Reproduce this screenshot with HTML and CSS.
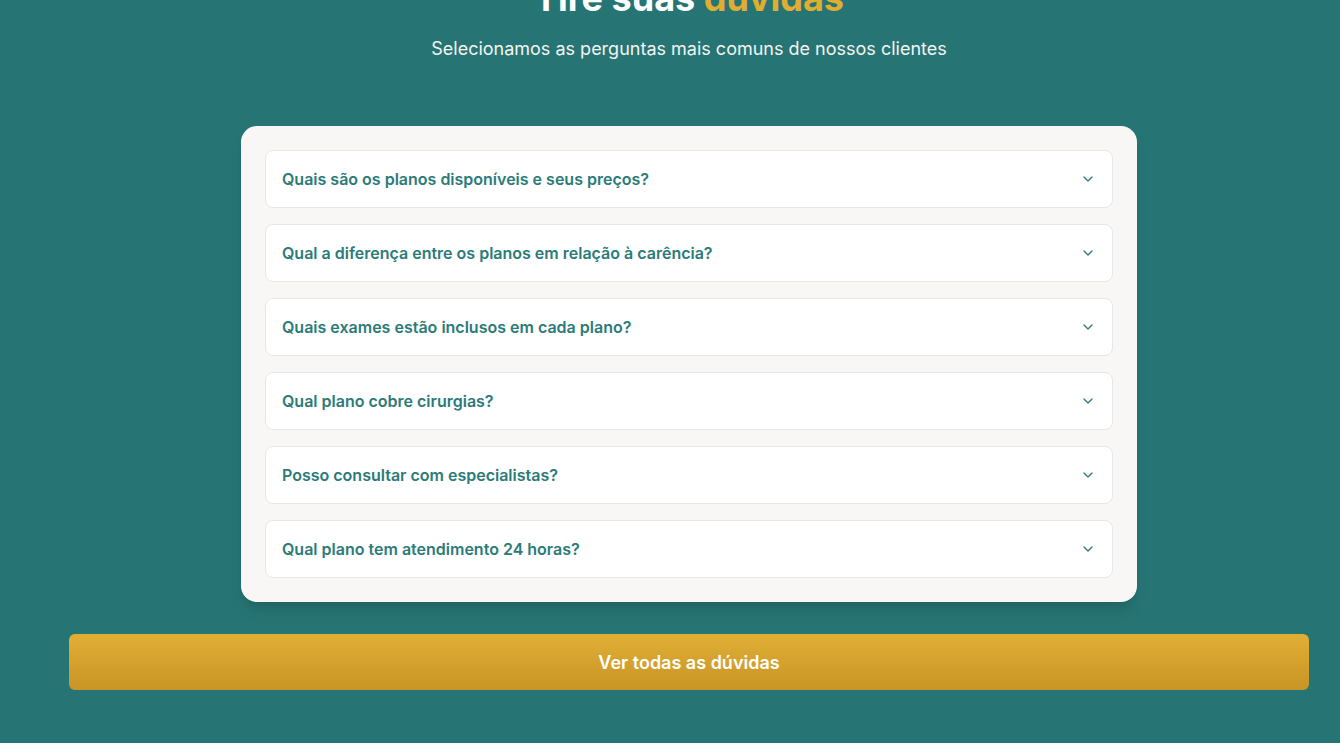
FILE: index.html
```html
<!DOCTYPE html>
<html lang="pt-BR">
<head>
<meta charset="utf-8">
<title>FAQ</title>
<link rel="stylesheet" href="styles.css">
</head>
<body>
<section class="faq">
  <div class="faq-inner">
    <h2 class="faq-title">Tire suas <span class="accent">dúvidas</span></h2>
    <p class="faq-subtitle">Selecionamos as perguntas mais comuns de nossos clientes</p>
    <div class="faq-card">
      <div class="faq-item"><span class="faq-q">Quais são os planos disponíveis e seus preços?</span><svg class="chev" viewBox="0 0 24 24" width="16" height="16"><path d="m6 9 6 6 6-6"/></svg></div>
      <div class="faq-item"><span class="faq-q">Qual a diferença entre os planos em relação à carência?</span><svg class="chev" viewBox="0 0 24 24" width="16" height="16"><path d="m6 9 6 6 6-6"/></svg></div>
      <div class="faq-item"><span class="faq-q">Quais exames estão inclusos em cada plano?</span><svg class="chev" viewBox="0 0 24 24" width="16" height="16"><path d="m6 9 6 6 6-6"/></svg></div>
      <div class="faq-item"><span class="faq-q">Qual plano cobre cirurgias?</span><svg class="chev" viewBox="0 0 24 24" width="16" height="16"><path d="m6 9 6 6 6-6"/></svg></div>
      <div class="faq-item"><span class="faq-q">Posso consultar com especialistas?</span><svg class="chev" viewBox="0 0 24 24" width="16" height="16"><path d="m6 9 6 6 6-6"/></svg></div>
      <div class="faq-item"><span class="faq-q">Qual plano tem atendimento 24 horas?</span><svg class="chev" viewBox="0 0 24 24" width="16" height="16"><path d="m6 9 6 6 6-6"/></svg></div>
    </div>
    <a class="faq-button" href="#">Ver todas as dúvidas</a>
  </div>
</section>
</body>
</html>
```
FILE: styles.css
```css
* { box-sizing: border-box; }
html, body {
  margin: 0;
  padding: 0;
  background: #267574;
  font-family: Inter, "Noto Sans", sans-serif;
  overflow: hidden;
}
.faq {
  padding: 0 0 60px 38px;
}
.faq-inner {
  max-width: 1240px;
  margin: 0 auto;
  display: flex;
  flex-direction: column;
  align-items: center;
}
.faq-title {
  margin: -22px 0 0;
  font-size: 36px;
  line-height: 40px;
  font-weight: 700;
  color: #ffffff;
  text-align: center;
}
.faq-title .accent { color: #e0ad33; }
.faq-subtitle {
  margin: 17px 0 0;
  font-size: 18px;
  line-height: 28px;
  color: #f3f4f1;
  text-align: center;
}
.faq-card {
  margin-top: 63px;
  width: 896px;
  background: #f8f7f5;
  border-radius: 16px;
  padding: 24px;
  display: flex;
  flex-direction: column;
  gap: 16px;
  box-shadow: 0 10px 15px -3px rgba(0,0,0,0.12), 0 4px 6px -4px rgba(0,0,0,0.1);
}
.faq-item {
  height: 58px;
  background: #ffffff;
  border: 1px solid #e5e7eb;
  border-radius: 8px;
  padding: 0 16px;
  display: flex;
  align-items: center;
  justify-content: space-between;
}
.faq-q {
  font-size: 16px;
  font-weight: 600;
  color: #2b7b79;
}
.chev {
  fill: none;
  stroke: #2b7b79;
  stroke-width: 2;
  stroke-linecap: round;
  stroke-linejoin: round;
  flex: none;
}
.faq-button {
  margin-top: 32px;
  width: 100%;
  height: 56px;
  border-radius: 6px;
  background: linear-gradient(180deg, #e1ae35 0%, #c89526 100%);
  color: #ffffff;
  font-size: 18px;
  font-weight: 600;
  text-decoration: none;
  display: flex;
  align-items: center;
  justify-content: center;
}
```
